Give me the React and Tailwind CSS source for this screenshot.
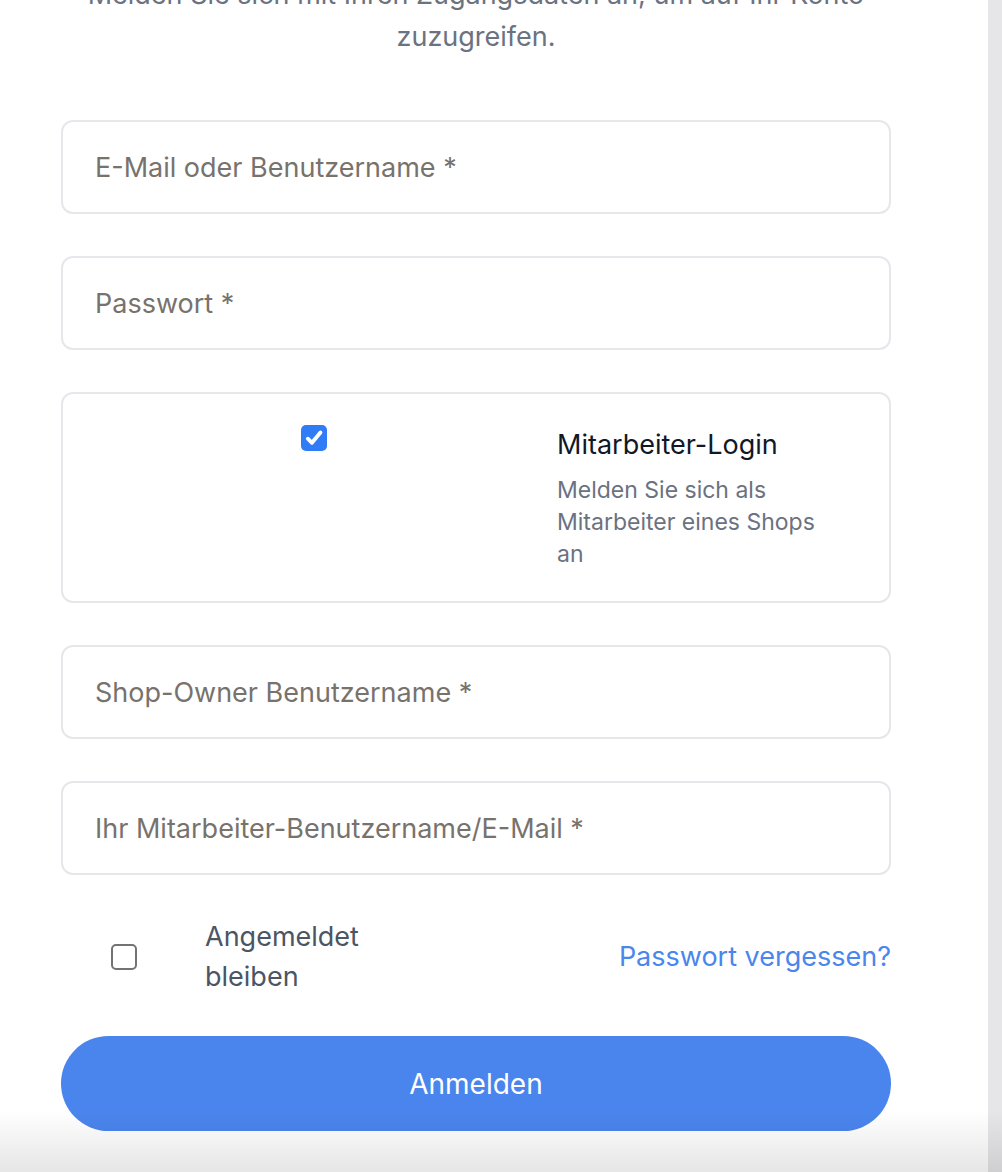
import React from 'react';

const Field = ({ placeholder, type = 'text' }) => (
  <input
    type={type}
    placeholder={placeholder}
    className="w-full h-[94px] rounded-[12px] border-2 border-[#e6e7eb] bg-white px-[32px] text-[27px] text-gray-800 placeholder:text-[#78726d] outline-none"
  />
);

const CheckedBox = () => (
  <div className="w-[26px] h-[26px] rounded-[5px] bg-[#2f7cf6] flex items-center justify-center">
    <svg viewBox="0 0 16 16" className="w-[22px] h-[22px]" fill="none" stroke="white" strokeWidth="2.8" strokeLinecap="round" strokeLinejoin="round">
      <path d="M3.5 8.5l3 3 6.2-7.5" />
    </svg>
  </div>
);

export default function App() {
  return (
    <div className="relative h-[1172px] overflow-hidden flex bg-[#e6e6e8]" style={{ fontFamily: 'Inter, "Noto Sans", sans-serif' }}>
      <div className="w-[988px] bg-white">
        <div className="w-[830px] ml-[61px]">
          <p className="-mt-[26px] text-center text-[27px] leading-[42px] text-[#6b7280]">
            Melden Sie sich mit Ihren Zugangsdaten an, um auf Ihr Konto zuzugreifen.
          </p>

          <div className="mt-[62px] flex flex-col gap-[42px]">
            <Field placeholder="E-Mail oder Benutzername *" />
            <Field placeholder="Passwort *" type="password" />

            <div className="rounded-[12px] border-2 border-[#e6e7eb] p-[31px] flex items-start gap-[24px]">
              <div className="flex-1 flex justify-center">
                <CheckedBox />
              </div>
              <div className="w-[301px]">
                <div className="text-[27px] leading-[40px] text-[#111827]">Mitarbeiter-Login</div>
                <div className="mt-[9px] max-w-[275px] text-[23px] leading-[32px] text-[#6b7280]">
                  Melden Sie sich als Mitarbeiter eines Shops an
                </div>
              </div>
            </div>

            <Field placeholder="Shop-Owner Benutzername *" />
            <Field placeholder="Ihr Mitarbeiter-Benutzername/E-Mail *" />
          </div>

          <div className="mt-[42px] flex items-center justify-between">
            <div className="flex items-center gap-[18px]">
              <div className="w-[126px] flex justify-center">
                <div className="w-[26px] h-[26px] rounded-[5px] border-2 border-[#737373] bg-white" />
              </div>
              <div className="w-[180px] text-[27px] leading-[40px] text-[#4b5563]">Angemeldet bleiben</div>
            </div>
            <a className="text-[27px] text-[#4a86ec]">Passwort vergessen?</a>
          </div>

          <button className="mt-[39px] w-full h-[95px] rounded-full bg-[#4a85ed] text-white text-[28px]">
            Anmelden
          </button>
        </div>
      </div>
      <div className="flex-1" />
      <div className="pointer-events-none absolute left-0 right-0 bottom-0 h-[62px] bg-gradient-to-b from-transparent to-black/10" />
    </div>
  );
}
